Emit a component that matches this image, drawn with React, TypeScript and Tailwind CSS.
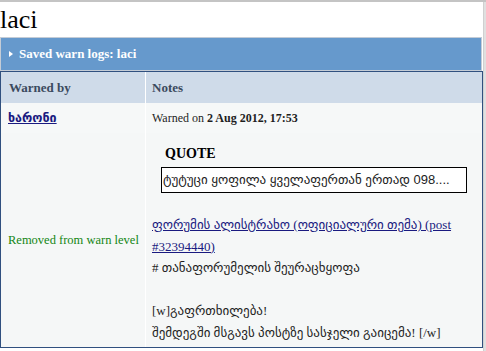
const serif = "font-[family-name:'Liberation_Serif','DejaVu_Sans',serif]"

export default function App() {
  return (
    <div className={`w-[486px] h-[351px] bg-white border-t-2 border-[#c4c4c4] flex overflow-hidden text-[#1e1e1e] ${serif}`}>
      <div className="w-[483px] flex flex-col">
        {/* Page title */}
        <h1 className="h-[35px] text-[26px] leading-[35px] text-black">laci</h1>

        {/* Section bar */}
        <div className="h-[34px] mr-px bg-[#6699cc] border border-[#c4ccd6] flex items-center pl-[8px] gap-[6px]">
          <svg width="4" height="6" viewBox="0 0 4 6" className="shrink-0">
            <path d="M0 0 L4 3 L0 6 Z" fill="#ffffff" />
          </svg>
          <span className="text-[13px] font-bold text-white">Saved warn logs: laci</span>
        </div>

        {/* Log table */}
        <div className="flex-1 mb-[3px] border border-[#30507f] bg-white grid grid-cols-[144px_1fr] grid-rows-[31px_30px_1fr] gap-x-px">
          <div className="bg-[#cfdbe9] flex items-center pl-[8px] text-[13px] font-bold text-[#3b4a5e]">Warned by</div>
          <div className="bg-[#cfdbe9] flex items-center pl-[6px] text-[13px] font-bold text-[#3b4a5e]">Notes</div>

          <div className="bg-[#f6f8f8] flex items-center pl-[7px]">
            <a href="#" className="text-[12.5px] font-bold text-[#1a1a80] underline">ხარონი</a>
          </div>
          <div className="bg-[#f6f8f8] flex items-center pl-[6px] text-[12px]">
            <span>
              Warned on <b>2 Aug 2012, 17:53</b>
            </span>
          </div>

          <div className="bg-[#f5f7f7] flex items-center pl-[7px]">
            <span className="text-[12.5px] text-[#138613]">Removed from warn level</span>
          </div>
          <div className="bg-[#f5f7f7] pl-[6px] pt-[11px] text-[13px] leading-[21.5px]">
            <div className="pl-[13px] text-[14px] font-bold leading-[20px] text-black">QUOTE</div>
            <div className="ml-[9px] mr-[15px] h-[26px] mt-[3px] border border-black bg-white flex items-center pl-[1px] font-[family-name:'Liberation_Sans','DejaVu_Sans',sans-serif] text-[13px] text-[#222]">
              ტუტუცი ყოფილა ყველაფერთან ერთად 098....
            </div>
            <div className="mt-[21px]">
              <a href="#" className="text-[#1a1a80] underline">
                ფორუმის ალისტრახო (ოფიციალური თემა) (post
                <br />
                #32394440)
              </a>
              <br />
              # თანაფორუმელის შეურაცხყოფა
              <br />
              <br />
              [w]გაფრთხილება!
              <br />
              შემდეგში მსგავს პოსტზე სასჯელი გაიცემა! [/w]
            </div>
          </div>
        </div>
      </div>
      <div className="w-[3px] bg-[#e0e0e0] border-l border-[#d0d0d0]" />
    </div>
  )
}
